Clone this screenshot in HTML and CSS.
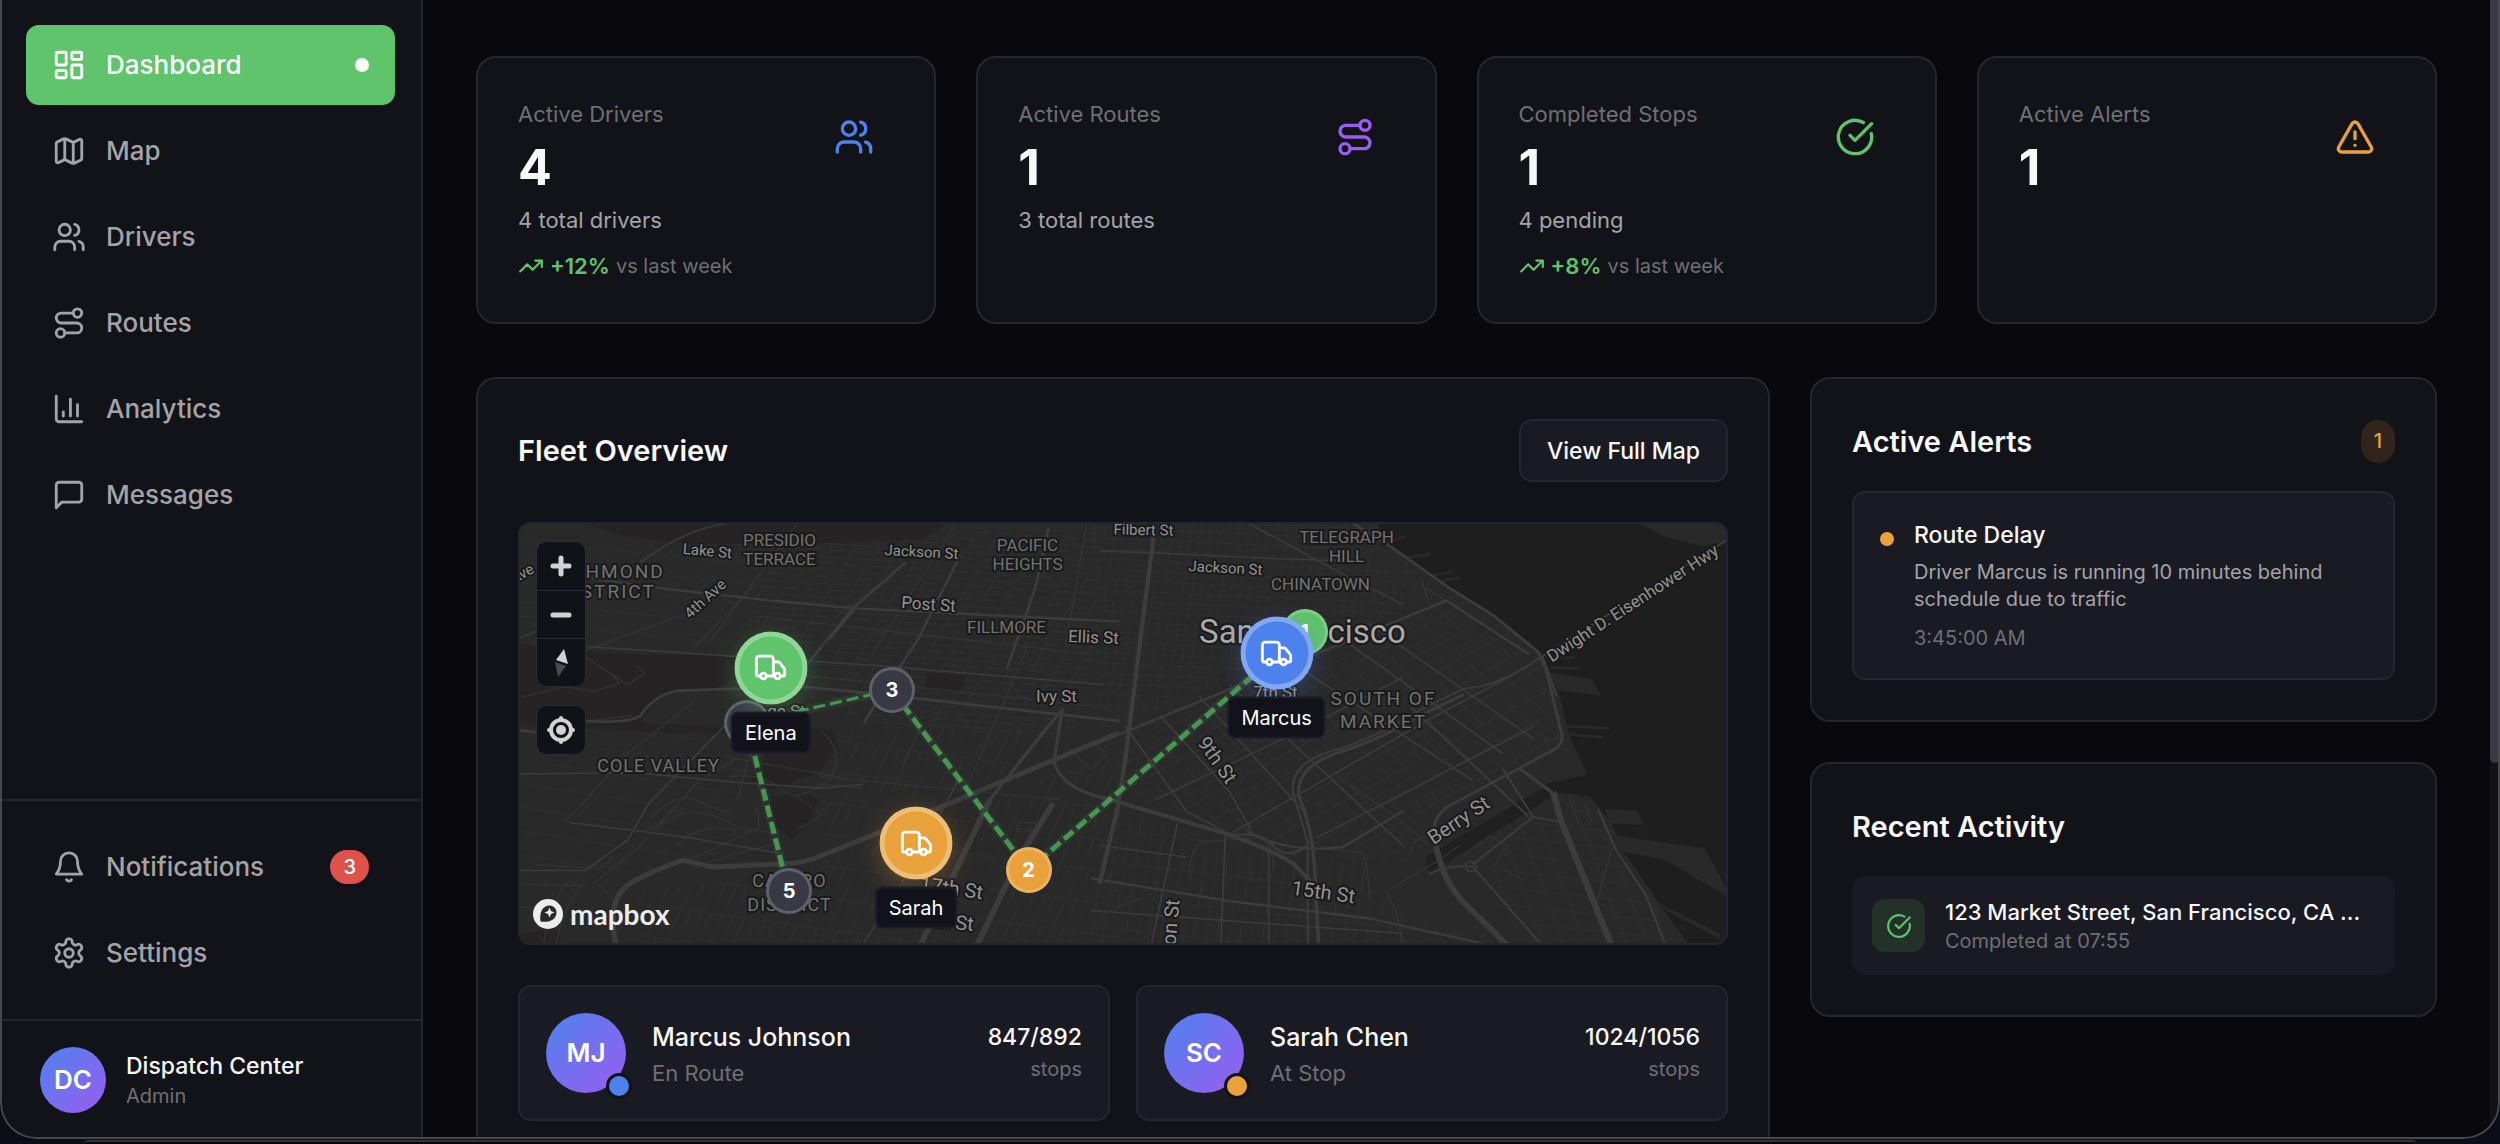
FILE: index.html
```html
<!DOCTYPE html>
<html lang="en">
<head>
<meta charset="utf-8">
<meta name="viewport" content="width=device-width, initial-scale=1">
<title>Dispatch Center</title>
<link rel="stylesheet" href="styles.css">
</head>
<body>
<svg class="sprite" aria-hidden="true">
  <symbol id="i-dashboard" viewBox="0 0 24 24"><rect x="3" y="3" width="7" height="9" rx="1"/><rect x="14" y="3" width="7" height="5" rx="1"/><rect x="14" y="12" width="7" height="9" rx="1"/><rect x="3" y="16" width="7" height="5" rx="1"/></symbol>
  <symbol id="i-map" viewBox="0 0 24 24"><path d="M14.106 5.553a2 2 0 0 0 1.788 0l3.659-1.83A1 1 0 0 1 21 4.619v12.764a1 1 0 0 1-.553.894l-4.553 2.277a2 2 0 0 1-1.788 0l-4.212-2.106a2 2 0 0 0-1.788 0l-3.659 1.83A1 1 0 0 1 3 19.381V6.618a1 1 0 0 1 .553-.894l4.553-2.277a2 2 0 0 1 1.788 0zM15 5.764v15M9 3.236v15"/></symbol>
  <symbol id="i-users" viewBox="0 0 24 24"><path d="M16 21v-2a4 4 0 0 0-4-4H6a4 4 0 0 0-4 4v2M22 21v-2a4 4 0 0 0-3-3.87M16 3.13a4 4 0 0 1 0 7.75"/><circle cx="9" cy="7" r="4"/></symbol>
  <symbol id="i-route" viewBox="0 0 24 24"><circle cx="6" cy="19" r="3"/><path d="M9 19h8.5a3.5 3.5 0 0 0 0-7h-11a3.5 3.5 0 0 1 0-7H15"/><circle cx="18" cy="5" r="3"/></symbol>
  <symbol id="i-chart" viewBox="0 0 24 24"><path d="M3 3v16a2 2 0 0 0 2 2h16M13 17V5M18 17V9M8 17v-3"/></symbol>
  <symbol id="i-message" viewBox="0 0 24 24"><path d="M21 15a2 2 0 0 1-2 2H7l-4 4V5a2 2 0 0 1 2-2h14a2 2 0 0 1 2 2z"/></symbol>
  <symbol id="i-bell" viewBox="0 0 24 24"><path d="M10.268 21a2 2 0 0 0 3.464 0M6 8a6 6 0 0 1 12 0c0 4.5 1.2 6.8 3 9H3c1.8-2.2 3-4.5 3-9z"/></symbol>
  <symbol id="i-settings" viewBox="0 0 24 24"><path d="M12.22 2h-.44a2 2 0 0 0-2 2v.18a2 2 0 0 1-1 1.73l-.43.25a2 2 0 0 1-2 0l-.15-.08a2 2 0 0 0-2.73.73l-.22.38a2 2 0 0 0 .73 2.73l.15.1a2 2 0 0 1 1 1.72v.51a2 2 0 0 1-1 1.74l-.15.09a2 2 0 0 0-.73 2.73l.22.38a2 2 0 0 0 2.73.73l.15-.08a2 2 0 0 1 2 0l.43.25a2 2 0 0 1 1 1.73V20a2 2 0 0 0 2 2h.44a2 2 0 0 0 2-2v-.18a2 2 0 0 1 1-1.73l.43-.25a2 2 0 0 1 2 0l.15.08a2 2 0 0 0 2.73-.73l.22-.39a2 2 0 0 0-.73-2.73l-.15-.08a2 2 0 0 1-1-1.74v-.5a2 2 0 0 1 1-1.74l.15-.09a2 2 0 0 0 .73-2.73l-.22-.38a2 2 0 0 0-2.73-.73l-.15.08a2 2 0 0 1-2 0l-.43-.25a2 2 0 0 1-1-1.73V4a2 2 0 0 0-2-2z"/><circle cx="12" cy="12" r="3"/></symbol>
  <symbol id="i-check" viewBox="0 0 24 24"><path d="M21.801 10A10 10 0 1 1 17 3.335M9 11l3 3L22 4"/></symbol>
  <symbol id="i-alert" viewBox="0 0 24 24"><path d="m21.73 18-8-14a2 2 0 0 0-3.48 0l-8 14A2 2 0 0 0 4 21h16a2 2 0 0 0 1.73-3M12 9v4M12 17h.01"/></symbol>
  <symbol id="i-trend" viewBox="0 0 24 24"><path d="m22 7-8.5 8.5-5-5L2 17M16 7h6v6"/></symbol>
  <symbol id="i-truck" viewBox="0 0 24 24"><path d="M14 18V6a2 2 0 0 0-2-2H4a2 2 0 0 0-2 2v11a1 1 0 0 0 1 1h2M15 18H9M19 18h2a1 1 0 0 0 1-1v-3.65a1 1 0 0 0-.22-.624l-3.48-4.35A1 1 0 0 0 17.52 8H14"/><circle cx="17" cy="18" r="2"/><circle cx="7" cy="18" r="2"/></symbol>
</svg>

<div class="window">
  <aside class="sidebar">
    <nav class="nav nav-main" aria-label="Main">
      <a class="nav-item active" href="#dashboard"><svg class="icon"><use href="#i-dashboard"/></svg>Dashboard<span class="dot"></span></a>
      <a class="nav-item" href="#map"><svg class="icon"><use href="#i-map"/></svg>Map</a>
      <a class="nav-item" href="#drivers"><svg class="icon"><use href="#i-users"/></svg>Drivers</a>
      <a class="nav-item" href="#routes"><svg class="icon"><use href="#i-route"/></svg>Routes</a>
      <a class="nav-item" href="#analytics"><svg class="icon"><use href="#i-chart"/></svg>Analytics</a>
      <a class="nav-item" href="#messages"><svg class="icon"><use href="#i-message"/></svg>Messages</a>
    </nav>
    <nav class="nav nav-secondary" aria-label="Account">
      <a class="nav-item" href="#notifications"><svg class="icon"><use href="#i-bell"/></svg>Notifications<span class="count">3</span></a>
      <a class="nav-item" href="#settings"><svg class="icon"><use href="#i-settings"/></svg>Settings</a>
    </nav>
    <div class="profile">
      <div class="avatar">DC</div>
      <div>
        <p class="profile-name">Dispatch Center</p>
        <p class="profile-role">Admin</p>
      </div>
    </div>
  </aside>

  <main class="main">
    <section class="stats">
      <article class="card stat">
        <div>
          <h2 class="stat-label">Active Drivers</h2>
          <p class="stat-value">4</p>
          <p class="stat-note">4 total drivers</p>
          <p class="trend"><svg class="icon"><use href="#i-trend"/></svg><strong>+12%</strong><span>vs last week</span></p>
        </div>
        <svg class="icon stat-icon blue"><use href="#i-users"/></svg>
      </article>
      <article class="card stat">
        <div>
          <h2 class="stat-label">Active Routes</h2>
          <p class="stat-value">1</p>
          <p class="stat-note">3 total routes</p>
        </div>
        <svg class="icon stat-icon purple"><use href="#i-route"/></svg>
      </article>
      <article class="card stat">
        <div>
          <h2 class="stat-label">Completed Stops</h2>
          <p class="stat-value">1</p>
          <p class="stat-note">4 pending</p>
          <p class="trend"><svg class="icon"><use href="#i-trend"/></svg><strong>+8%</strong><span>vs last week</span></p>
        </div>
        <svg class="icon stat-icon green"><use href="#i-check"/></svg>
      </article>
      <article class="card stat">
        <div>
          <h2 class="stat-label">Active Alerts</h2>
          <p class="stat-value">1</p>
        </div>
        <svg class="icon stat-icon orange"><use href="#i-alert"/></svg>
      </article>
    </section>

    <div class="content">
      <section class="card fleet">
        <header class="fleet-head">
          <h2 class="title">Fleet Overview</h2>
          <button class="button" type="button">View Full Map</button>
        </header>

        <div class="map">
          <svg class="map-canvas" viewBox="0 0 1211 423" preserveAspectRatio="xMidYMid slice">
            <defs>
              <pattern id="g-rich" width="22" height="46" patternUnits="userSpaceOnUse" patternTransform="matrix(1 .11 -1 1.05 0 0)"><path d="M0 0V46M0 0H22"/></pattern>
              <pattern id="g-mid" width="52" height="34" patternUnits="userSpaceOnUse" patternTransform="matrix(1 .07 -.54 1 0 0)"><path d="M0 0V34M0 0H52M0 17H30"/></pattern>
              <pattern id="g-east" width="44" height="27" patternUnits="userSpaceOnUse" patternTransform="matrix(1 .05 -.13 1 0 0)"><path d="M0 0V27M0 0H44M22 0V14"/></pattern>
              <pattern id="g-soma" width="86" height="58" patternUnits="userSpaceOnUse" patternTransform="matrix(.84 -.52 .68 .76 0 0)"><path d="M0 0V58M0 0H86M0 29H86M43 0V29"/></pattern>
              <pattern id="g-mission" width="52" height="84" patternUnits="userSpaceOnUse" patternTransform="matrix(1 .13 -.12 1 0 0)"><path d="M0 0V84M0 0H52M26 20V84"/></pattern>
              <pattern id="g-midsouth" width="50" height="78" patternUnits="userSpaceOnUse" patternTransform="matrix(1 .15 -.42 1 0 0)"><path d="M0 0V78M0 0H50M25 0V40"/></pattern>
              <pattern id="g-hills" width="62" height="54" patternUnits="userSpaceOnUse" patternTransform="matrix(1 .17 -.86 1 0 0)"><path d="M0 0V54M0 0H62"/></pattern>
              <pattern id="g-dog" width="50" height="46" patternUnits="userSpaceOnUse" patternTransform="matrix(1 .12 .33 1 0 0)"><path d="M0 0V46M0 0H50"/></pattern>
            </defs>
            <rect width="1211" height="423" fill="#292929"/>

            <g transform="matrix(.4209 0 0 .3827 -58 -151)">
              <path fill="url(#g-rich)" d="M138 430 540 470 700 440 760 520 660 740 138 715Z"/>
              <path fill="url(#g-mid)" d="M760 445 1530 400 1530 640 1460 960 960 920 800 840 680 760 700 560Z"/>
              <path fill="url(#g-hills)" d="M138 1050 540 920 700 1060 600 1260 380 1350 138 1340Z"/>
              <path fill="url(#g-midsouth)" d="M900 940 1430 900 1400 1000 880 1260 850 1050Z"/>
              <path fill="url(#g-midsouth)" d="M420 1360 800 1310 1220 1130 1568 1000V1500H420Z"/>
              <g class="park">
                <path d="M300 398H1160L1100 440 860 450 700 452 560 452 390 432Z"/>
                <path d="M138 712 380 740 660 745 690 790 600 832 480 842 430 920 640 930 640 948 500 945 138 925Z"/>
                <path d="M760 935 885 935 900 985 850 1050 740 1095 690 1070 730 1000Z"/>
                <path d="M735 1115 800 1100 855 1120 830 1180 790 1225 745 1185Z"/>
                <path d="M1112 788 1205 794 1190 840 1104 834ZM138 1470 230 1462 245 1500H138Z"/>
              </g>
              <g class="minor">
                <path d="M138 640 300 655M138 855 250 825 320 838 380 815 360 790M290 740 400 820 440 790 420 770M300 915 410 900M450 1170Q520 1100 560 1120T650 1160M470 1190Q540 1120 640 1180T700 1130M520 1240Q560 1180 660 1200M480 1180Q500 1145 520 1150T500 1175L440 1200"/>
                <path d="M320 1340Q360 1300 420 1250L560 1080 660 1010M250 1180 400 1000 560 860M330 1340 380 1400M180 1290 330 1300 370 1270M640 1060Q720 1050 760 1090T860 1080L960 1090M560 1300Q640 1260 740 1240M540 1280 700 1200 760 1210M700 960 660 1120M200 1495Q210 1400 260 1330M230 1495Q240 1420 290 1340M138 1340 300 1345M860 940Q910 990 890 1040T840 1090M140 1400 210 1410M800 1110 860 1160 800 1200"/>
                <path d="M560 720 700 560M300 730 520 640M600 700 800 400M980 740 1180 400M900 640Q980 560 1020 550M1340 690 1400 400M1440 720 1490 400M1200 1100 1350 720M1050 1040 1100 920"/>
                <path d="M860 1060 1430 1120M640 1010 900 1060M700 640 1500 740M690 780 1540 880M960 920 1000 830M1330 1180h40v24h-46ZM1460 1000 1500 970 1540 1000 1500 1040Z"/>
              </g>
              <g class="road">
                <path d="M430 500Q540 410 640 398M138 700 230 660 300 620M138 1053 420 1050 660 1075 860 1090 960 1080M260 1180 520 1215 760 1260M138 1305H300L400 1225 450 1130 650 905M300 720 640 745 1000 770 1530 820M960 1495 1050 1340 1190 1060"/>
                <path stroke-width="6" d="M300 540 480 568 740 600 940 620 1150 632 1568 655"/>
                <path stroke-width="7" d="M138 938 190 945M300 915Q410 920 430 900 465 845 520 835L820 825 1000 845 1568 915"/>
                <path stroke-width="6" d="M780 830 930 625 1060 500M960 920 1090 700 1190 480M880 700 940 620M1300 780 1370 560 1400 410"/>
                <path stroke-width="13" d="M372 1500Q352 1400 385 1360 400 1330 530 1278L600 1296 720 1290Q800 1290 840 1275L1000 1205 1568 945"/>
                <path stroke-width="14" d="M1095 1500 1160 1350 1260 1120M1410 1130 1330 1270 1230 1500"/>
                <path stroke-width="8" d="M1260 1120 1390 940 1432 885 1412 1020Q1430 1100 1568 1125"/>
              </g>
            </g>

            <g transform="matrix(.4337 0 0 .3827 582 -151)">
              <path fill="url(#g-east)" d="M-20 396H640L690 470 780 590 380 780 0 940Z"/>
              <path fill="url(#g-soma)" d="M0 960 400 780 800 590 900 650 1020 750 1068 980 960 1060 760 1180 720 1290 480 1240 440 1280 60 1130Z"/>
              <path fill="url(#g-mission)" d="M-20 1130 440 1280 620 1260 660 1400 900 1500H-20Z"/>
              <path fill="url(#g-dog)" d="M960 1200 1130 1120 1180 1190 1210 1270 1300 1410 1330 1500H1000L880 1350Z"/>
              <path class="water" d="M640 395 655 440 700 475 800 562 900 636 1020 742 1042 790 1062 850 1082 950 1125 1055 1030 1078 1048 1100 1130 1112 1180 1180 1212 1262 1290 1390 1360 1500H1460V395Z"/>
              <path fill="#202020" d="M752 1270 1028 1086 1048 1108 790 1292 760 1310Z"/>
              <path fill="#292929" d="M1040 788 1135 805 1155 847 1056 834ZM1165 1143 1240 1150 1256 1186 1180 1182ZM1190 1214 1395 1247 1460 1380 1300 1276 1208 1256ZM1250 400 1460 393V442L1390 458 1300 432ZM1290 1390 1430 1470V1484L1310 1412Z"/>
              <path class="pier" d="M660 445 710 432M690 492 762 478M735 540 818 524M752 556 832 540M1030 745 1096 750M1040 775 1105 777M1075 928 1176 934M1080 948 1160 958"/>
              <g class="minor">
                <path d="M740 540 762 612M800 600 740 560M1085 1125 1108 1188M1120 1135 1136 1180M1150 1145 1190 1250M1180 1250 1140 1420M660 1360 780 1280 830 1240M660 1360 680 1400 700 1495M210 1330Q200 1250 240 1230L370 1220Q400 1230 400 1300M350 1305V1330H390M480 1245 600 1258Q620 1265 622 1380M720 1260Q710 1240 740 1220L830 1190M840 1265 900 1215 940 1240 910 1290 980 1330M0 1420 90 1380M550 1060 690 1170 760 1240"/>
              </g>
              <g class="road">
                <path d="M0 470 120 475 400 490 560 496M340 396 560 530 700 610M60 930 200 1150 300 1210M140 900 300 1100 350 1200M230 850 470 1150M300 820 700 1240M440 760 860 1070M560 700 930 1000M620 660 1000 960M130 1120 480 930 700 800M300 1210 760 910 960 790M500 1220 1000 930M290 1210 280 1495M390 1240 390 1495M180 1180 120 1495M0 1240 200 1270M-20 1410 700 1470"/>
                <path stroke-width="6" d="M0 970 250 855 400 785 800 600 990 740"/>
                <path stroke-width="10" d="M125 430 90 740 60 1010 42 1140 0 1340"/>
                <path stroke-width="10" d="M0 1112 280 1205Q400 1250 450 1290L495 1345"/>
                <path stroke-width="6" d="M300 1215Q370 1200 400 1240T480 1240M-20 1325 300 1385 620 1430 900 1500M340 1200Q420 1260 560 1245L700 1150"/>
                <path stroke-width="5" d="M1460 432 1015 750Q920 825 840 830L740 885Q640 955 560 985 430 1020 448 1110L480 1230V1500"/>
                <path stroke-width="8" d="M840 845 740 900Q640 965 565 992 450 1030 460 1110 492 1200 496 1300L505 1500"/>
                <path stroke-width="7" d="M585 398 660 450 800 562 910 640 1012 735Q1030 770 1040 830L1066 950Q1072 980 1030 1000L800 1140Q765 1170 772 1220"/>
                <path stroke-width="14" d="M772 1220Q790 1340 850 1400L940 1500"/>
                <path stroke-width="5" d="M1022 748 1054 850M860 1290 1000 1165 1064 1178M760 1315Q800 1290 860 1295L1020 1500M930 1040 1000 1165M720 880 990 1165"/>
                <path stroke-width="8" d="M970 1040 1046 1104"/>
                <path stroke-width="15" d="M1046 1100 1065 1178 1180 1500"/>
                <path stroke-width="5" d="M1150 1145 1190 1250 1260 1370 1305 1500"/>
                <circle cx="857" cy="1295" r="13"/>
              </g>
            </g>

            <g class="labels street">
              <text x="190" y="34" transform="rotate(5 190 28)">Lake St</text>
              <text x="404" y="35" transform="rotate(3 404 29)">Jackson St</text>
              <text x="4" y="57" transform="rotate(-30 4 51)">Ave</text>
              <text x="187" y="82" transform="rotate(-42 187 76)">4th Ave</text>
              <text x="626" y="13" transform="rotate(1 626 7)">Filbert St</text>
              <text x="708" y="51" transform="rotate(3 708 45)">Jackson St</text>
            </g>
            <g class="labels street near">
              <text x="411" y="88" transform="rotate(4 411 82)">Post St</text>
              <text x="576" y="121" transform="rotate(2 576 115)">Ellis St</text>
              <text x="539" y="180">Ivy St</text>
              <text x="259" y="195">Page St</text>
              <text x="758" y="176">7th St</text>
              <text x="1115" y="87" transform="rotate(-33 1115 81)">Dwight D. Eisenhower Hwy</text>
            </g>
            <g class="labels street nearest">
              <text x="434" y="373" transform="rotate(8 434 366)">17th St</text>
              <text x="436" y="408" transform="rotate(6 446 400)">th St</text>
              <text x="700" y="245" transform="rotate(55 700 238)">9th St</text>
              <text x="941" y="305" transform="rotate(-34 941 298)">Berry St</text>
              <text x="806" y="377" transform="rotate(8 806 370)">15th St</text>
              <text x="662" y="378" class="at-end" transform="rotate(-85 662 378)">Mission St</text>
            </g>
            <g class="labels area">
              <text x="262" y="24">PRESIDIO</text><text x="262" y="43">TERRACE</text>
              <text x="510" y="29">PACIFIC</text><text x="510" y="48">HEIGHTS</text>
              <text x="489" y="111">FILLMORE</text>
              <text x="829" y="21">TELEGRAPH</text><text x="829" y="40">HILL</text>
              <text x="803" y="68">CHINATOWN</text>
            </g>
            <g class="labels area medium">
              <text x="141" y="250">COLE VALLEY</text>
              <text x="272" y="365">CASTRO</text><text x="272" y="389">DISTRICT</text>
            </g>
            <g class="labels area large">
              <text x="90" y="56">RICHMOND</text><text x="90" y="76">DISTRICT</text>
              <text x="866" y="183">SOUTH OF</text><text x="866" y="206">MARKET</text>
            </g>
            <text class="city" x="785" y="121">San Francisco</text>

            <path class="route-glow" d="M787 109 511 348 374 168 229 201 271 369"/>
            <path class="route far" d="M374 168 229 201"/>
            <path class="route" d="M787 109 511 348 374 168M229 201 271 369"/>
          </svg>

          <div class="map-controls">
            <div class="control-group">
              <button type="button" aria-label="Zoom in"><svg viewBox="0 0 48 48"><path class="bar" d="M24 16V32M16 24H32"/></svg></button>
              <button type="button" aria-label="Zoom out"><svg viewBox="0 0 48 48"><path class="bar" d="M16 24H32"/></svg></button>
              <button type="button" aria-label="Reset bearing"><svg viewBox="0 0 48 48"><path fill="#d2d2d2" d="M27 10 19 21 31 25Z"/><path fill="#4a4a4a" d="M18 23 29 27 21 38Z"/></svg></button>
            </div>
            <div class="control-group">
              <button type="button" aria-label="Find my location"><svg viewBox="0 0 48 48"><circle cx="24" cy="24" r="10" fill="none" stroke="#d2d2d2" stroke-width="4"/><circle cx="24" cy="24" r="5" fill="#d2d2d2"/><path stroke="#d2d2d2" stroke-width="4" stroke-linecap="round" d="M24 12v1M24 35v1M12 24h1M35 24h1"/></svg></button>
            </div>
          </div>

          <div class="stop gray s4">4</div>
          <div class="stop gray s3">3</div>
          <div class="stop orange-bg s2">2</div>
          <div class="stop gray s5">5</div>
          <div class="stop green-bg s1">1</div>
          <div class="truck green-bg elena"><svg class="icon"><use href="#i-truck"/></svg><span>Elena</span></div>
          <div class="truck orange-bg sarah"><svg class="icon"><use href="#i-truck"/></svg><span>Sarah</span></div>
          <div class="truck blue-bg marcus"><svg class="icon"><use href="#i-truck"/></svg><span>Marcus</span></div>

          <a class="mapbox" href="#mapbox"><svg viewBox="0 0 30 30"><circle cx="15" cy="15" r="15" fill="#ececec"/><path fill="#292929" d="M7.5 22.5C6 13 10 6.5 16.5 6.5a7 7 0 0 1 7 7C23.5 20 17 24 7.5 22.5Z"/><path fill="#ececec" d="m16.5 8.500 1.500 3.500 3.500 1.500-3.500 1.500-1.500 3.500-1.500-3.500-3.500-1.500 3.500-1.500Z"/></svg>mapbox</a>
        </div>

        <div class="drivers">
          <article class="driver">
            <div class="avatar large">MJ<span class="status blue-bg"></span></div>
            <div class="driver-info"><h3>Marcus Johnson</h3><p>En Route</p></div>
            <div class="driver-stops"><strong>847/892</strong><p>stops</p></div>
          </article>
          <article class="driver">
            <div class="avatar large">SC<span class="status orange-bg"></span></div>
            <div class="driver-info"><h3>Sarah Chen</h3><p>At Stop</p></div>
            <div class="driver-stops"><strong>1024/1056</strong><p>stops</p></div>
          </article>
        </div>
      </section>

      <div class="side">
        <section class="card">
          <header class="side-head"><h2 class="title">Active Alerts</h2><span class="pill">1</span></header>
          <article class="alert">
            <span class="alert-dot"></span>
            <div>
              <h3>Route Delay</h3>
              <p class="alert-text">Driver Marcus is running 10 minutes behind schedule due to traffic</p>
              <p class="alert-time">3:45:00 AM</p>
            </div>
          </article>
        </section>
        <section class="card">
          <header class="side-head"><h2 class="title">Recent Activity</h2></header>
          <article class="activity">
            <span class="activity-icon"><svg class="icon"><use href="#i-check"/></svg></span>
            <div class="activity-text">
              <h3>123 Market Street, San Francisco, CA ...</h3>
              <p>Completed at 07:55</p>
            </div>
          </article>
        </section>
      </div>
    </div>
  </main>
  <div class="scroll-track"><div class="scroll-thumb"></div></div>
</div>
<div class="window-behind"></div>
</body>
</html>
```
FILE: styles.css
```css
:root {
  --bg: #09090d;
  --surface: #121318;
  --raised: #1a1a22;
  --line: #25262e;
  --text: #f7f7f8;
  --soft: #a3a3a8;
  --muted: #6f6f75;
  --green: #5fc46b;
  --blue: #4d82ee;
  --purple: #9b5cf0;
  --orange: #e9a23b;
  --red: #df524c;
}

* { box-sizing: border-box; }

body {
  margin: 0;
  min-height: 100vh;
  display: flex;
  flex-direction: column;
  overflow: hidden;
  background: #0d0d17;
  color: var(--text);
  font-family: Inter, "Liberation Sans", sans-serif;
  font-size: 22px;
  line-height: 32px;
}

h2, h3, p { margin: 0; font-weight: 400; }
a { color: inherit; text-decoration: none; }
button { font: inherit; color: inherit; cursor: pointer; }

.sprite { position: absolute; width: 0; height: 0; }
.icon {
  width: 34px;
  height: 34px;
  flex: none;
  fill: none;
  stroke: currentColor;
  stroke-width: 2;
  stroke-linecap: round;
  stroke-linejoin: round;
}

.blue { color: var(--blue); }
.purple { color: var(--purple); }
.green { color: var(--green); }
.orange { color: var(--orange); }
.blue-bg { background: var(--blue); }
.green-bg { background: var(--green); }
.orange-bg { background: var(--orange); }
.gray { background: #393945; }

.window {
  position: relative;
  flex: 1;
  display: flex;
  overflow: hidden;
  background: var(--bg);
  border-radius: 0 0 36px 36px;
}
.window::after {
  content: "";
  position: absolute;
  inset: 0;
  border: 2px solid #48484c;
  border-top: 0;
  border-radius: inherit;
  pointer-events: none;
}
.window-behind {
  height: 4px;
  margin: 1px 84px 0;
  border-top: 2px solid #30343a;
  border-radius: 12px 12px 0 0;
  background: #08080a;
}

/* Sidebar */
.sidebar {
  width: 423px;
  flex: none;
  display: flex;
  flex-direction: column;
  background: var(--surface);
  border-right: 2px solid var(--line);
}
.nav { display: flex; flex-direction: column; gap: 6px; padding: 26px; }
.nav-main { flex: 1; padding-top: 25px; }
.nav-secondary { border-top: 2px solid var(--line); }
.nav-item {
  display: flex;
  align-items: center;
  gap: 20px;
  height: 80px;
  padding: 0 26px;
  border-radius: 13px;
  color: var(--soft);
  font-size: 26px;
  font-weight: 500;
}
.nav-item.active { background: var(--green); color: #fff; }
.dot { width: 14px; height: 14px; margin-left: auto; border-radius: 50%; background: #fff; }
.count {
  margin-left: auto;
  padding: 0 13px;
  border-radius: 17px;
  background: var(--red);
  color: #fff;
  font-size: 20px;
  line-height: 34px;
}
.profile {
  display: flex;
  align-items: center;
  gap: 20px;
  padding: 26px 40px;
  border-top: 2px solid var(--line);
}
.avatar {
  position: relative;
  flex: none;
  display: grid;
  place-items: center;
  width: 66px;
  height: 66px;
  border-radius: 50%;
  background: linear-gradient(135deg, var(--blue), var(--purple));
  color: #fff;
  font-size: 26px;
  font-weight: 600;
}
.avatar.large { width: 80px; height: 80px; }
.profile-name { font-size: 23px; font-weight: 500; }
.profile-role { color: var(--muted); font-size: 20px; line-height: 28px; }

/* Main */
.main {
  flex: 1;
  min-width: 0;
  display: flex;
  flex-direction: column;
  gap: 53px;
  padding: 56px 53px 0;
}
.card {
  padding: 40px;
  background: var(--surface);
  border: 2px solid var(--line);
  border-radius: 20px;
}
.stats { display: grid; grid-template-columns: repeat(4, 1fr); gap: 40px; }
.stat {
  display: flex;
  justify-content: space-between;
  align-items: flex-start;
  min-height: 268px;
}
.stat-label { color: var(--muted); font-size: 22px; line-height: 32px; }
.stat-value { margin: 12px 0; font-size: 50px; font-weight: 700; line-height: 50px; }
.stat-note { color: var(--soft); }
.trend { display: flex; align-items: center; gap: 6px; margin-top: 14px; color: var(--green); }
.trend .icon { width: 26px; height: 26px; }
.trend strong { font-weight: 600; }
.trend span { color: var(--muted); font-size: 20px; }
.stat-icon { width: 40px; height: 40px; margin: 19px 20px; }

.content { flex: 1; display: grid; grid-template-columns: repeat(3, 1fr); gap: 40px; }
.title { font-size: 29px; font-weight: 600; line-height: 45px; }

.fleet {
  grid-column: span 2;
  display: flex;
  flex-direction: column;
  gap: 40px;
  padding-bottom: 18px;
  border-bottom: 0;
  border-radius: 20px 20px 0 0;
}
.fleet-head { display: flex; justify-content: space-between; align-items: center; }
.button {
  height: 63px;
  padding: 0 26px;
  background: var(--raised);
  border: 2px solid var(--line);
  border-radius: 13px;
  font-size: 23px;
  font-weight: 500;
}

/* Map */
.map {
  position: relative;
  height: 423px;
  overflow: hidden;
  border-radius: 13px;
}
.map::after {
  content: "";
  position: absolute;
  inset: 0;
  border: 2px solid #24252e;
  border-radius: inherit;
  pointer-events: none;
}
.map-canvas { display: block; width: 100%; height: 100%; }
.map-canvas pattern path { fill: none; stroke: #323232; stroke-width: 2; }
.park { fill: #252323; }
.water { fill: #1e1e1e; }
.pier { stroke: #292929; stroke-width: 7; }
.minor { fill: none; stroke: #353535; stroke-width: 3; }
.road { fill: none; stroke: #3c3c3c; stroke-width: 4; stroke-linejoin: round; }
.labels text, .city {
  font-family: Roboto, "Liberation Sans", sans-serif;
  text-anchor: middle;
  paint-order: stroke;
  stroke: #1a1a1a;
  stroke-width: 4px;
  stroke-linejoin: round;
}
.labels .at-end { text-anchor: end; }
.street { fill: #939393; font-size: 15px; }
.street.near { font-size: 17px; }
.street.nearest { font-size: 20px; }
.area { fill: #727272; font-size: 17px; }
.area.medium { font-size: 18px; letter-spacing: 1px; }
.area.large { font-size: 19px; letter-spacing: 2px; }
.city { fill: #aaa; font-size: 33px; }
.route, .route-glow { fill: none; stroke: #489452; stroke-width: 5px; }
.route { stroke-dasharray: 12 5; }
.route.far { stroke-width: 3px; }
.route-glow { stroke-width: 9px; opacity: .12; }

.map-controls {
  position: absolute;
  top: 19px;
  left: 18px;
  display: flex;
  flex-direction: column;
  gap: 18px;
}
.control-group {
  display: flex;
  flex-direction: column;
  width: 50px;
  overflow: hidden;
  background: #111218;
  border: 1px solid #2a2a38;
  border-radius: 11px;
}
.control-group button { height: 48px; padding: 0; border: 0; background: none; }
.control-group button + button { border-top: 1px solid #2a2a38; }
.control-group svg { display: block; width: 48px; height: 48px; }
.bar { stroke: #d2d2d2; stroke-width: 5; stroke-linecap: round; }

.stop, .truck {
  position: absolute;
  display: grid;
  place-items: center;
  border-radius: 50%;
  transform: translate(-50%, -50%);
}
.stop {
  width: 46px;
  height: 46px;
  border: 3px solid rgba(255, 255, 255, .2);
  color: #fff;
  font-size: 20px;
  font-weight: 700;
}
.truck {
  width: 73px;
  height: 73px;
  border: 5px solid rgba(255, 255, 255, .3);
  color: #fff;
}
.truck span {
  position: absolute;
  top: 75px;
  left: 50%;
  transform: translateX(-50%);
  padding: 0 12px;
  background: #12131a;
  border: 2px solid #1c1c26;
  border-radius: 7px;
  font-size: 20px;
  line-height: 38px;
}
.truck.green-bg { box-shadow: 0 6px 24px rgba(95, 196, 107, .3); }
.truck.orange-bg { box-shadow: 0 6px 24px rgba(233, 162, 59, .3); }
.truck.blue-bg { box-shadow: 0 6px 24px rgba(77, 130, 238, .3); }
.s1 { left: 65%; top: 26%; }
.s2 { left: 42.2%; top: 82.2%; }
.s3 { left: 30.9%; top: 39.6%; }
.s4 { left: 18.9%; top: 47.5%; }
.s5 { left: 22.4%; top: 87.3%; }
.elena { left: 20.9%; top: 34.5%; }
.sarah { left: 32.9%; top: 76%; }
.marcus { left: 62.7%; top: 31%; }

.mapbox {
  position: absolute;
  left: 15px;
  bottom: 15px;
  display: flex;
  align-items: center;
  gap: 7px;
  color: #ececec;
  font-family: Lato, Inter, sans-serif;
  font-size: 28px;
  font-weight: 700;
}
.mapbox svg { width: 30px; height: 30px; }

/* Drivers */
.drivers { display: grid; grid-template-columns: 1fr 1fr; gap: 26px; }
.driver {
  display: flex;
  align-items: center;
  gap: 26px;
  height: 136px;
  padding: 0 26px;
  background: var(--raised);
  border: 2px solid var(--line);
  border-radius: 13px;
}
.status {
  position: absolute;
  right: -6px;
  bottom: -6px;
  width: 26px;
  height: 26px;
  border: 3px solid var(--surface);
  border-radius: 50%;
}
.driver-info { flex: 1; }
.driver h3 { font-size: 25px; font-weight: 500; line-height: 40px; }
.driver-info p { color: var(--muted); }
.driver-stops { text-align: right; }
.driver-stops strong { font-size: 23px; font-weight: 500; }
.driver-stops p { color: var(--muted); font-size: 20px; }

/* Side column */
.side { display: flex; flex-direction: column; gap: 40px; }
.side-head {
  display: flex;
  justify-content: space-between;
  align-items: center;
  margin-bottom: 27px;
}
.pill {
  padding: 0 13px;
  border-radius: 21px;
  background: #30241b;
  color: var(--orange);
  font-size: 20px;
  font-weight: 500;
  line-height: 43px;
}
.alert {
  display: flex;
  gap: 20px;
  padding: 26px;
  background: var(--raised);
  border: 2px solid var(--line);
  border-radius: 13px;
}
.alert h3 { font-size: 23px; font-weight: 500; line-height: 32px; }
.alert-dot {
  flex: none;
  width: 14px;
  height: 14px;
  margin-top: 13px;
  border-radius: 50%;
  background: var(--orange);
}
.alert-text { margin-top: 8px; color: var(--soft); font-size: 20px; line-height: 27px; }
.alert-time { margin-top: 11px; color: var(--muted); font-size: 20px; line-height: 28px; }
.activity {
  display: flex;
  align-items: center;
  gap: 20px;
  padding: 20px;
  background: var(--raised);
  border-radius: 13px;
}
.activity-icon {
  display: grid;
  flex: none;
  place-items: center;
  width: 53px;
  height: 53px;
  border-radius: 13px;
  background: #24312b;
  color: var(--green);
}
.activity-icon .icon { width: 26px; height: 26px; }
.activity-text { min-width: 0; }
.activity h3 {
  overflow: hidden;
  font-size: 22px;
  font-weight: 500;
  line-height: 32px;
  text-overflow: ellipsis;
  white-space: nowrap;
}
.activity p { color: var(--muted); font-size: 20px; line-height: 27px; }

.scroll-track { width: 10px; flex: none; background: var(--surface); }
.scroll-thumb { height: 67%; background: #3a3945; border-radius: 0 0 5px 5px; }
```
